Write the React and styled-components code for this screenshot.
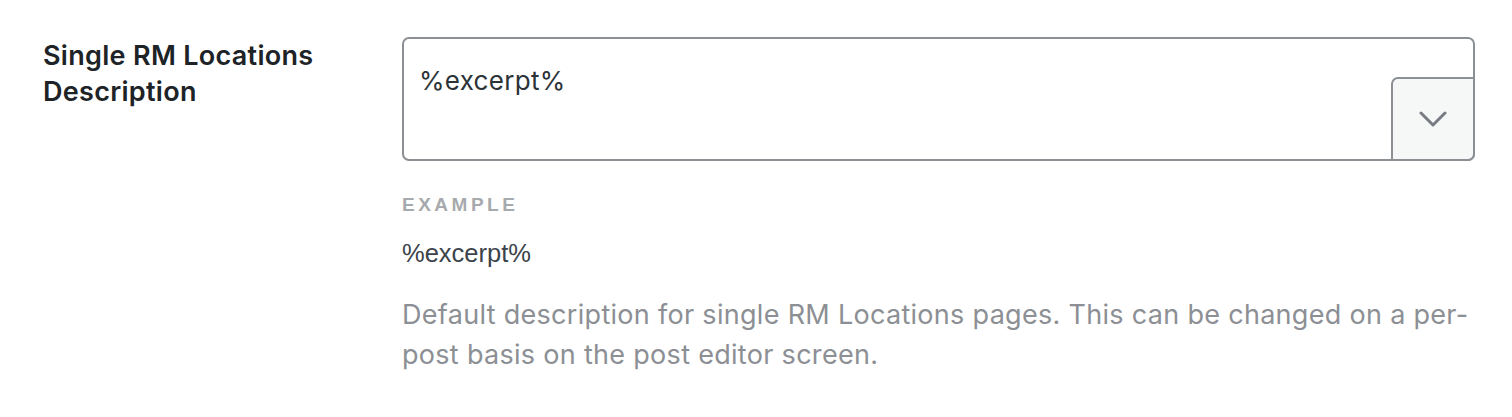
import React from 'react';
import styled, { createGlobalStyle } from 'styled-components';

const GlobalStyle = createGlobalStyle`
  html, body {
    margin: 0;
    padding: 0;
    background: #fff;
  }
  body {
    font-family: Inter, "Noto Sans", sans-serif;
  }
`;

// one settings row: label column + field column
const Row = styled.section`
  display: grid;
  grid-template-columns: 359px 1073px;
  padding: 37px 0 0 43px;
  width: 1512px;
  height: 417px;
  box-sizing: border-box;
`;

const Label = styled.label`
  font-size: 27px;
  font-weight: 600;
  line-height: 36px;
  letter-spacing: 0.3px;
  color: #1d2327;
  margin-top: 1px;
`;

const Field = styled.div`
  display: flex;
  flex-direction: column;
`;

const Editor = styled.div`
  position: relative;
  height: 124px;
  border: 2px solid #8c8f94;
  border-radius: 7px;
  box-sizing: border-box;
  padding: 26px 0 0 15px;
  font-size: 26px;
  line-height: 32px;
  letter-spacing: 0.3px;
  color: #2c3338;
  background: #fff;
`;

// the variable picker toggle sits over the corner of the editor
const Toggle = styled.button`
  position: absolute;
  right: -2px;
  bottom: -2px;
  width: 84px;
  height: 84px;
  display: flex;
  align-items: center;
  justify-content: center;
  background: #f6f7f7;
  border: 2px solid #8c8f94;
  border-radius: 7px 0 7px 0;
  padding: 0;
  cursor: pointer;
`;

const ExampleTitle = styled.div`
  margin-top: 34px;
  font-family: "Liberation Sans", Arial, sans-serif;
  font-size: 19px;
  font-weight: 700;
  letter-spacing: 3.5px;
  color: #a7aaad;
  line-height: 20px;
`;

const ExampleValue = styled.div`
  margin-top: 24px;
  font-family: "Liberation Sans", Arial, sans-serif;
  font-size: 25.5px;
  color: #3c434a;
  line-height: 28px;
`;

const Help = styled.p`
  margin: 28px 0 0;
  font-size: 27px;
  line-height: 40px;
  letter-spacing: 0.3px;
  color: #8c8f94;
`;

const Chevron = () => (
  <svg width="28" height="16" viewBox="0 0 28 16" fill="none">
    <path d="M2 2l12 12L26 2" stroke="#787c82" strokeWidth="3" strokeLinecap="round" strokeLinejoin="round" />
  </svg>
);

export default function App() {
  return (
    <>
      <GlobalStyle />
      <Row>
        <Label>Single RM Locations Description</Label>
        <Field>
          <Editor>
            %excerpt%
            <Toggle aria-label="Insert variable">
              <Chevron />
            </Toggle>
          </Editor>
          <ExampleTitle>EXAMPLE</ExampleTitle>
          <ExampleValue>%excerpt%</ExampleValue>
          <Help>
            Default description for single RM Locations pages. This can be changed on a per-post basis on the post editor screen.
          </Help>
        </Field>
      </Row>
    </>
  );
}
